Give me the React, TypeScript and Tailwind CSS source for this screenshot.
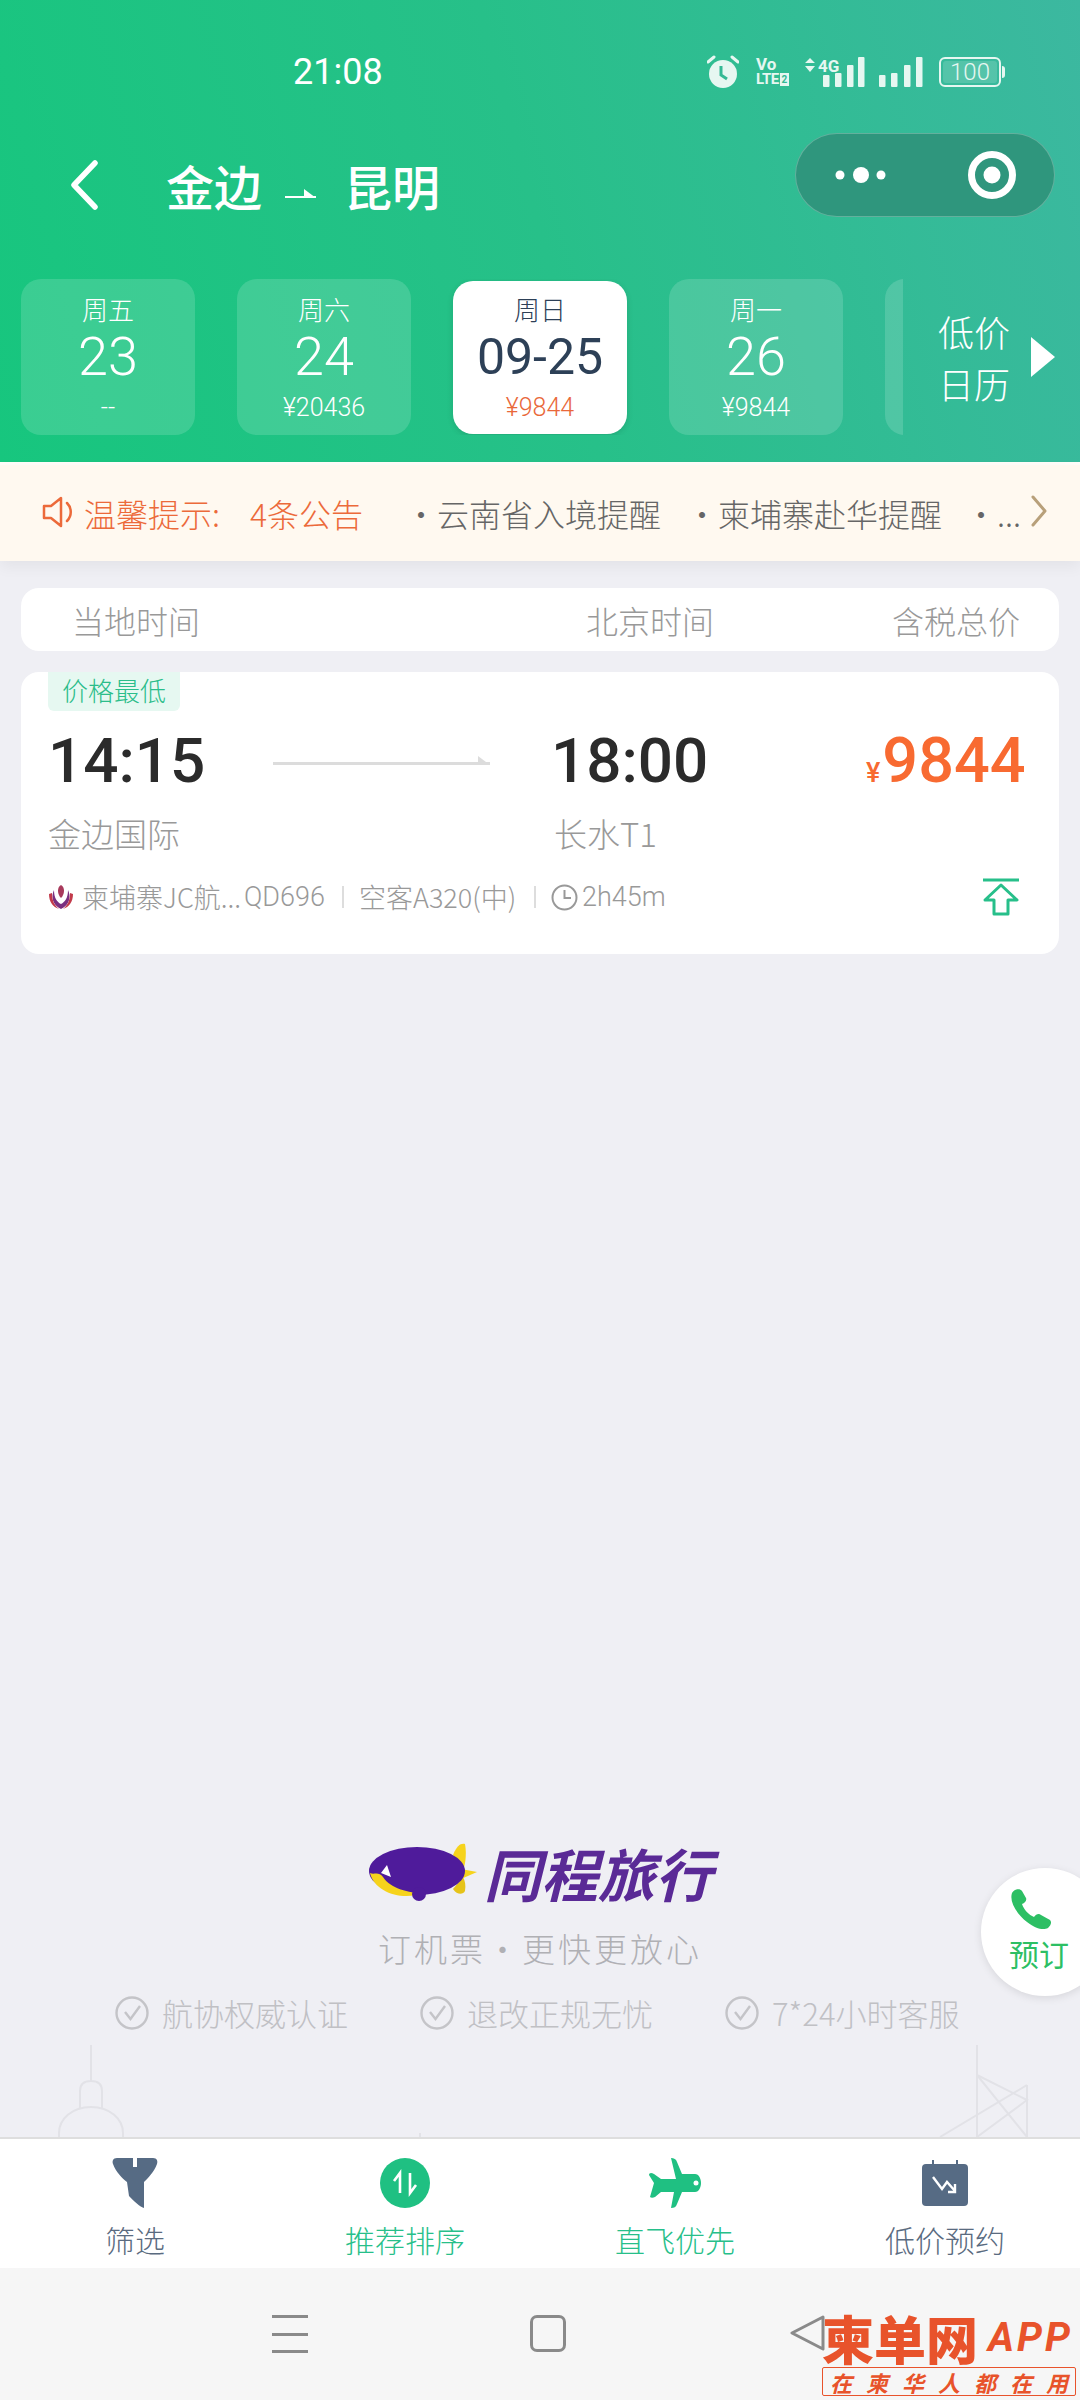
import React from "react";

const cjk = { fontFamily: '"Noto Sans CJK SC", sans-serif' };

function Alarm() {
  return (
    <svg width="32" height="34" viewBox="0 0 32 34" className="shrink-0">
      <circle cx="16" cy="19" r="14" fill="#e6f7f1" />
      <path d="M1 7 L7 2 M31 7 L25 2" stroke="#e6f7f1" strokeWidth="3" strokeLinecap="round" />
      <path d="M14 11 L14 20 L20 24" stroke="#35b995" strokeWidth="3" fill="none" />
    </svg>
  );
}

function Volte() {
  return (
    <div className="relative w-[36px] h-[31px] shrink-0 text-[#e6f7f1] font-bold leading-none" style={{ fontFamily: "Roboto, sans-serif" }}>
      <div className="text-[17px] leading-[15px]">Vo</div>
      <div className="flex items-center text-[15px] leading-[15px] tracking-[-0.5px]">
        LTE
        <span className="ml-[1px] w-[9px] h-[13px] bg-[#e6f7f1] text-[#35b995] text-[10px] leading-[13px] text-center">2</span>
      </div>
    </div>
  );
}

function Signal({ four }: { four?: boolean }) {
  const xs = four ? [18, 30, 42, 53] : [0, 12, 25, 37];
  const ys = [18, 16, 8, 0];
  return (
    <svg width={four ? 60 : 44} height="30" viewBox={four ? "0 0 60 30" : "0 0 44 30"} className="shrink-0">
      {xs.map((x, i) => (
        <rect key={x} x={x} y={ys[i]} width="6.5" height={30 - ys[i]} rx="1" fill="#e6f7f1" />
      ))}
      {four && (
        <>
          <path d="M5 1 L10 6 L0 6 Z M5 15 L10 9 L0 9 Z" fill="#e6f7f1" />
          <text x="13" y="15" fontSize="17" fontWeight="700" fill="#e6f7f1" fontFamily="Roboto, sans-serif">4G</text>
        </>
      )}
    </svg>
  );
}

function Battery() {
  return (
    <div className="flex items-center shrink-0">
      <div className="w-[62px] h-[30px] rounded-[6px] border-2 border-[#e6f7f1] p-[2px]">
        <div className="w-full h-full rounded-[3px] bg-white/15 flex items-center justify-center text-[24px] leading-none text-[#e6f7f1]" style={{ fontFamily: "Roboto, sans-serif", fontWeight: 300 }}>
          100
        </div>
      </div>
      <div className="w-[3px] h-[12px] ml-[1px] bg-[#e6f7f1] rounded-r-sm" />
    </div>
  );
}

function DateCard({ week, num, price }: { week: string; num: string; price: string }) {
  return (
    <div className="w-[174px] h-[156px] shrink-0 rounded-[20px] bg-white/15 flex flex-col items-center text-white">
      <div className="mt-[14px] h-[32px] text-[26px] leading-[32px] font-light" style={cjk}>{week}</div>
      <div className="mt-[6px] h-[52px] text-[54px] leading-[52px] font-light" style={{ fontFamily: "Roboto, sans-serif" }}>{num}</div>
      <div className="mt-[10px] h-[30px] text-[25px] leading-[30px] font-light" style={{ fontFamily: "Roboto, sans-serif" }}>{price}</div>
    </div>
  );
}

function ThinArrow({ width, color, stroke }: { width: number; color: string; stroke: number }) {
  return (
    <svg width={width} height="14" viewBox={`0 0 ${width} 14`} className="shrink-0">
      <path d={`M0 ${12 - stroke / 2} H${width}`} stroke={color} strokeWidth={stroke} />
      <path d={`M${width} 12 L${width - 12} 12 L${width - 12} 3 Z`} fill={color} />
    </svg>
  );
}

function Header() {
  return (
    <div className="h-[462px] shrink-0 flex flex-col bg-[linear-gradient(75deg,#17c67e_0%,#27c089_50%,#3cb8a0_100%)]">
      <div className="flex items-center h-[40px] mt-[52px] pl-[293px] pr-[75px]">
        <div className="text-[36px] leading-[40px] text-white" style={{ fontFamily: "Roboto, sans-serif" }}>21:08</div>
        <div className="ml-auto flex items-center">
          <Alarm />
          <div className="ml-[17px]"><Volte /></div>
          <div className="ml-[13px]"><Signal four /></div>
          <div className="ml-[14px]"><Signal /></div>
          <div className="ml-[16px]"><Battery /></div>
        </div>
      </div>
      <div className="flex items-start mt-[41px] h-[84px] pl-[69px] pr-[25px]">
        <div className="flex items-center h-[104px] text-white">
          <svg width="30" height="50" viewBox="0 0 30 50" className="shrink-0">
            <path d="M26 3 L5 25 L26 47" fill="none" stroke="#fff" strokeWidth="5.5" strokeLinecap="round" strokeLinejoin="round" />
          </svg>
          <div className="ml-[67px] text-[48px] leading-[56px] font-medium" style={cjk}>金边</div>
          <div className="ml-[23px] mt-[16px]"><ThinArrow width={31} color="#ffffff" stroke={2} /></div>
          <div className="ml-[28px] text-[48px] leading-[56px] font-medium" style={cjk}>昆明</div>
        </div>
        <div className="ml-auto w-[260px] h-[84px] rounded-full bg-[#2f967d] border border-white/25 flex items-center">
          <svg width="130" height="60" viewBox="0 0 130 60" className="shrink-0">
            <circle cx="44" cy="30" r="4.5" fill="#fff" />
            <circle cx="65" cy="30" r="8" fill="#fff" />
            <circle cx="85" cy="30" r="4.5" fill="#fff" />
          </svg>
          <div className="w-px h-[52px] bg-white/25" />
          <svg width="130" height="60" viewBox="0 0 130 60" className="shrink-0">
            <circle cx="66" cy="30" r="20.5" fill="none" stroke="#fff" strokeWidth="7" />
            <circle cx="66" cy="30" r="8.5" fill="#fff" />
          </svg>
        </div>
      </div>
      <div className="flex items-start mt-[62px] pl-[21px]">
        <div className="w-[882px] shrink-0 flex gap-[42px] overflow-hidden">
          <DateCard week="周五" num="23" price="--" />
          <DateCard week="周六" num="24" price="¥20436" />
          <div className="w-[174px] h-[153px] mt-[2px] shrink-0 rounded-[20px] bg-white shadow-[0_2px_6px_rgba(0,0,0,0.12)] flex flex-col items-center">
            <div className="mt-[12px] h-[32px] text-[26px] leading-[32px] font-light text-[#2d4057]" style={cjk}>周日</div>
            <div className="mt-[6px] h-[52px] text-[50px] leading-[52px] text-[#2d4057]" style={{ fontFamily: "Roboto, sans-serif" }}>09-25</div>
            <div className="mt-[10px] h-[30px] text-[25px] leading-[30px] font-light text-[#e9683a]" style={{ fontFamily: "Roboto, sans-serif" }}>¥9844</div>
          </div>
          <DateCard week="周一" num="26" price="¥9844" />
          <DateCard week="周二" num="" price="" />
        </div>
        <div className="flex items-center h-[156px] text-white">
          <div className="ml-[35px] text-[36px] leading-[52px] font-light text-center" style={cjk}>
            <div>低价</div>
            <div>日历</div>
          </div>
          <svg width="24" height="40" viewBox="0 0 24 40" className="ml-[21px] shrink-0">
            <path d="M0 0 L24 20 L0 40 Z" fill="#fff" />
          </svg>
        </div>
      </div>
    </div>
  );
}

function Notice() {
  return (
    <div className="h-[99px] shrink-0 pt-[3px] bg-[#fffdf9]">
      <div className="relative z-10 h-[96px] flex items-start pt-[30px] pl-[42px] bg-[#fff9f0] shadow-[0_6px_14px_rgba(0,0,0,0.05)]" style={cjk}>
        <svg width="34" height="34" viewBox="0 0 34 34" className="shrink-0">
          <path d="M2 11 H9 L19 3 V31 L9 23 H2 Z" fill="none" stroke="#ec6a3a" strokeWidth="2.5" strokeLinejoin="round" />
          <path d="M25 8 C30 13 30 21 25 26" fill="none" stroke="#ec6a3a" strokeWidth="2.5" strokeLinecap="round" />
        </svg>
        <div className="ml-[8px] text-[32px] leading-[36px] font-light text-[#ec6a3a] w-[166px] shrink-0">温馨提示:</div>
        <div className="text-[32px] leading-[36px] font-light text-[#ec6a3a] w-[155px] shrink-0">4条公告</div>
        <div className="text-[32px] leading-[36px] font-light text-[#666] w-[281px] shrink-0">·云南省入境提醒</div>
        <div className="text-[32px] leading-[36px] font-light text-[#666] w-[279px] shrink-0">·柬埔寨赴华提醒</div>
        <div className="text-[32px] leading-[36px] font-light text-[#666] w-[65px] shrink-0">·...</div>
        <svg width="18" height="32" viewBox="0 0 18 32" className="shrink-0">
          <path d="M3 2 L15 16 L3 30" fill="none" stroke="#b8a07a" strokeWidth="3" strokeLinecap="round" strokeLinejoin="round" />
        </svg>
      </div>
    </div>
  );
}

function FlightCard() {
  return (
    <div className="mt-[21px] h-[282px] rounded-[18px] bg-white overflow-hidden relative">
      <div className="ml-[27px] w-[132px] h-[39px] rounded-b-[6px] bg-[#e6f8f1] text-[#2bbd8a] text-[26px] leading-[36px] font-light text-center" style={cjk}>价格最低</div>
      <div className="flex items-center mt-[14px] h-[72px] pl-[27px]">
        <div className="w-[225px] shrink-0 text-[62px] leading-[72px] font-medium text-[#2b2b2b]" style={{ fontFamily: "Roboto, sans-serif" }}>14:15</div>
        <div className="shrink-0 -mt-[2px]"><ThinArrow width={217} color="#dcdcdc" stroke={3} /></div>
        <div className="ml-[61px] w-[315px] shrink-0 text-[62px] leading-[72px] font-medium text-[#2b2b2b]" style={{ fontFamily: "Roboto, sans-serif" }}>18:00</div>
        <div className="flex items-baseline text-[#f86a31] font-medium" style={{ fontFamily: "Roboto, sans-serif" }}>
          <span className="text-[27px]">¥</span>
          <span className="ml-[2px] text-[63px] leading-[72px]">9844</span>
        </div>
      </div>
      <div className="flex mt-[14px] pl-[27px] text-[33px] leading-[44px] font-light text-[#999]" style={cjk}>
        <div className="w-[506px] shrink-0">金边国际</div>
        <div>长水T1</div>
      </div>
      <div className="flex items-center mt-[22px] h-[40px] pl-[27px] text-[27px] leading-[36px] font-light text-[#999] whitespace-nowrap" style={cjk}>
        <svg width="26" height="26" viewBox="0 0 26 26" className="shrink-0">
          <path d="M13 1 C9 3 9 10 13 14 C17 10 17 3 13 1 Z" fill="#a83a5c" />
          <path d="M6 6 C3 12 4 21 13 25 C22 21 23 12 20 6 C20 14 17 18 13 20 C9 18 6 14 6 6 Z" fill="#7a2f80" />
          <path d="M1 10 C1 18 5 23 11 25 C6 21 4 16 4 9 Z M25 10 C25 18 21 23 15 25 C20 21 22 16 22 9 Z" fill="#c23a4a" />
        </svg>
        <span className="ml-[8px] w-[153px] shrink-0">柬埔寨JC航...</span>
        <span className="ml-[9px] w-[84px] shrink-0" style={{ fontFamily: "Roboto, sans-serif", fontWeight: 300 }}>QD696</span>
        <span className="ml-[14px] w-[2px] h-[22px] bg-[#ddd] shrink-0" />
        <span className="ml-[15px] w-[160px] shrink-0">空客A320(中)</span>
        <span className="ml-[15px] w-[2px] h-[22px] bg-[#ddd] shrink-0" />
        <svg width="27" height="27" viewBox="0 0 27 27" className="ml-[15px] shrink-0">
          <circle cx="13.5" cy="13.5" r="12" fill="none" stroke="#999" strokeWidth="2" />
          <path d="M13.5 6 V14 H20" fill="none" stroke="#999" strokeWidth="2" />
        </svg>
        <span className="ml-[4px] shrink-0" style={{ fontFamily: "Roboto, sans-serif", fontWeight: 300 }}>2h45m</span>
        <svg width="38" height="38" viewBox="0 0 38 38" className="ml-auto mr-[39px] shrink-0">
          <path d="M1 2 H37 M19 7 L35 22 H26 V36 H12 V22 H3 Z" fill="none" stroke="#27bf8a" strokeWidth="3" strokeLinejoin="round" />
        </svg>
      </div>
    </div>
  );
}

function Guarantee({ text, w }: { text: string; w: string }) {
  return (
    <div className={`flex items-center shrink-0 ${w}`}>
      <svg width="34" height="34" viewBox="0 0 34 34" className="shrink-0">
        <circle cx="17" cy="17" r="15.5" fill="none" stroke="#c4c4c8" strokeWidth="2.4" />
        <path d="M10 16 L15.5 23 L25 10" fill="none" stroke="#c4c4c8" strokeWidth="2.4" />
      </svg>
      <span className="ml-[13px] text-[31px] leading-[40px] font-light text-[#c0c0c4] whitespace-nowrap" style={cjk}>{text}</span>
    </div>
  );
}

function Branding() {
  return (
    <div className="mt-auto flex flex-col">
      <div className="flex items-center justify-center h-[58px] pl-[1px]">
        <svg width="108" height="58" viewBox="0 0 108 58" className="shrink-0">
          <path d="M84 12 C88 2 92 0 96 1 C98 12 96 22 94 28 Z" fill="#f6d31c" />
          <path d="M84 46 C88 52 94 52 96 48 C97 42 96 38 94 34 Z" fill="#e6c319" />
          <path d="M92 26 L108 29 L92 36 Z" fill="#f6d31c" />
          <ellipse cx="48" cy="28" rx="48" ry="24" fill="#4f1b9b" />
          <path d="M1 30 C5 32 10 28 14 34 C22 46 40 50 54 50 C34 58 6 50 1 30 Z" fill="#f6d31c" />
          <path d="M12 30 L18 22 L22 34 Z" fill="#ffffff" />
          <circle cx="50" cy="51" r="7" fill="#4f1b9b" />
        </svg>
        <div className="ml-[7px] text-[57px] leading-[58px] font-bold italic text-[#5a2a96]" style={cjk}>同程旅行</div>
      </div>
      <div className="mt-[24px] h-[46px] text-center text-[33px] leading-[46px] font-light text-[#b0b0b4] tracking-[3px]" style={cjk}>订机票·更快更放心</div>
      <div className="flex mt-[22px] h-[40px] pl-[115px]">
        <Guarantee text="航协权威认证" w="w-[305px]" />
        <Guarantee text="退改正规无忧" w="w-[305px]" />
        <Guarantee text="7*24小时客服" w="w-[300px]" />
      </div>
      <svg width="1080" height="92" viewBox="0 0 1080 92" className="mt-[12px] shrink-0 block">
        <g fill="none" stroke="#e2e2e7" strokeWidth="2">
          <path d="M91 0 V36 M80 64 V46 Q80 36 91 36 Q102 36 102 46 V64 M59 92 V88 C59 74 72 62 91 62 C110 62 123 74 123 88 V92" />
          <path d="M420 92 V88" />
          <path d="M977 0 V92 M977 30 L1027 55 L977 92 M1027 40 V92 M977 30 L1027 92 M940 92 L1027 40" />
        </g>
      </svg>
    </div>
  );
}

function TabItem({ label, color, children }: { label: string; color: string; children: React.ReactNode }) {
  return (
    <div className="flex flex-col items-center">
      <div className="mt-[18px] h-[52px] flex items-center justify-center">{children}</div>
      <div className="mt-[13px] text-[30px] leading-[34px] font-light" style={{ ...cjk, color }}>{label}</div>
    </div>
  );
}

function Tabs() {
  return (
    <div className="h-[131px] shrink-0 grid grid-cols-4 bg-white border-t-2 border-[#dedede]">
      <TabItem label="筛选" color="#5a6b80">
        <svg width="46" height="50" viewBox="0 0 46 50">
          <path d="M5 0 H21 V9 H25 V0 H41 C45 0 46 3 45 6 C42 14 36 20 32 24 V50 C27 48 23 44 17 38 L15 24 C10 20 4 14 1 6 C0 3 1 0 5 0 Z" fill="#566b84" />
        </svg>
      </TabItem>
      <TabItem label="推荐排序" color="#27bf8a">
        <svg width="50" height="52" viewBox="0 0 50 52">
          <circle cx="25" cy="26" r="25" fill="#1fc082" />
          <path d="M20 36 V16 L14 24 M30 16 V36 L36 28" fill="none" stroke="#fff" strokeWidth="2.6" />
        </svg>
      </TabItem>
      <TabItem label="直飞优先" color="#27bf8a">
        <svg width="52" height="50" viewBox="0 0 52 50">
          <path d="M22 0 C25 0 27 1 28 4 L33 16 H46 C50 16 52 21 52 25 C52 29 50 34 46 34 H33 L28 46 C27 49 25 50 22 50 L25 34 H12 L6 39 C4 40 2 40 1 39 L5 25 L0 17 C0 15 2 14 5 16 L12 21 H27 Z" fill="#1fc082" />
          <circle cx="47" cy="25" r="2.5" fill="#fff" />
        </svg>
      </TabItem>
      <TabItem label="低价预约" color="#5a6b80">
        <svg width="46" height="46" viewBox="0 0 46 46">
          <path d="M11 0 V6 M35 0 V6" stroke="#566b84" strokeWidth="2" />
          <rect x="0" y="4" width="46" height="42" rx="4" fill="#566b84" />
          <path d="M11 17 L20 29 L25 22 L33 31 M33 24 V32 H26" fill="none" stroke="#fff" strokeWidth="2.4" />
        </svg>
      </TabItem>
    </div>
  );
}

function NavBar() {
  return (
    <div className="relative h-[132px] shrink-0 bg-[#f6f6f6] flex items-start pt-[47px] pl-[272px]">
      <div className="w-[36px] h-[38px] flex flex-col justify-between shrink-0">
        <div className="h-[3px] bg-[#8a8a8a]" />
        <div className="h-[3px] bg-[#8a8a8a]" />
        <div className="h-[3px] bg-[#8a8a8a]" />
      </div>
      <div className="ml-[222px] w-[36px] h-[37px] rounded-[7px] border-[3px] border-[#8a8a8a] shrink-0" />
      <svg width="36" height="36" viewBox="0 0 36 36" className="ml-[223px] shrink-0">
        <path d="M34 2 L3 18 L34 34 Z" fill="none" stroke="#8a8a8a" strokeWidth="3" strokeLinejoin="round" />
      </svg>
      <div className="absolute left-[822px] top-[42px] w-[254px]">
        <div className="flex items-center h-[56px]">
          <span className="w-[156px] text-[52px] leading-[56px] font-black text-[#e8532b] tracking-[0px] whitespace-nowrap" style={cjk}>柬单网</span>
          <span className="ml-[10px] text-[40px] leading-[46px] font-bold italic text-[#e8532b] tracking-[3px]" style={{ fontFamily: "Roboto, sans-serif" }}>APP</span>
        </div>
        <div className="mt-[1px] h-[29px] border border-[#e8532b] rounded-[2px] flex items-center justify-around text-[22px] leading-[26px] font-bold italic text-[#e8532b]" style={cjk}>
          {["在", "柬", "华", "人", "都", "在", "用"].map((c, i) => (
            <span key={i}>{c}</span>
          ))}
        </div>
      </div>
    </div>
  );
}

export default function App() {
  return (
    <div className="relative w-[1080px] h-[2400px] overflow-hidden flex flex-col bg-[#efeff4]">
      <Header />
      <Notice />
      <div className="flex-1 flex flex-col pt-[27px]">
        <div className="mx-[21px]">
          <div className="h-[63px] rounded-[18px] bg-white flex items-center pl-[51px] text-[32px] leading-[40px] font-light text-[#999]" style={cjk}>
            <div className="w-[514px] shrink-0">当地时间</div>
            <div className="w-[306px] shrink-0">北京时间</div>
            <div>含税总价</div>
          </div>
          <FlightCard />
        </div>
        <Branding />
      </div>
      <Tabs />
      <NavBar />
      <div className="absolute left-[981px] top-[1868px] w-[128px] h-[128px] rounded-full bg-white shadow-[0_2px_8px_rgba(0,0,0,0.1)] flex flex-col pl-[28px] pt-[20px]">
        <svg width="44" height="42" viewBox="0 0 44 42" className="shrink-0">
          <path d="M3 5 C5 1 11 0 13 3 L17 10 C18 12 16 15 13 16 C15 22 20 27 25 29 C27 26 30 25 32 27 L41 32 C43 34 42 37 39 40 C35 42 28 42 18 34 C8 26 0 14 3 5 Z" fill="#2dbf64" />
        </svg>
        <div className="mt-[6px] text-[30px] leading-[34px] text-[#2dbf64] whitespace-nowrap" style={cjk}>预订</div>
      </div>
    </div>
  );
}
